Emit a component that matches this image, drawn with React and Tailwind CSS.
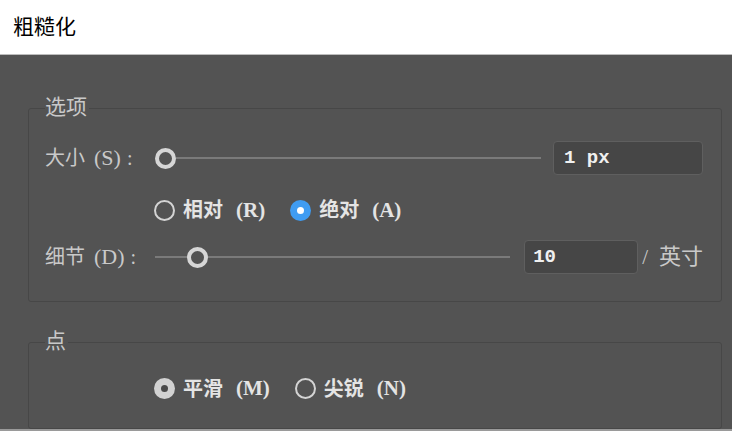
import React from 'react';

const FONT = { fontFamily: '"Liberation Serif", "Noto Sans CJK SC", serif' };
const MONO = { fontFamily: '"Liberation Mono", monospace' };

const Radio = ({ checked, tone = 'blue' }) => {
    if (!checked) {
        return <span className="w-[21px] h-[21px] rounded-full border-2 border-[#d4d4d4] shrink-0" />;
    }
    if (tone === 'blue') {
        return (
            <span className="w-[21px] h-[21px] rounded-full bg-[#3f9cf2] flex items-center justify-center shrink-0">
                <span className="w-[7px] h-[7px] rounded-full bg-white" />
            </span>
        );
    }
    return (
        <span className="w-[21px] h-[21px] rounded-full bg-[#d2d2d2] flex items-center justify-center shrink-0">
            <span className="w-[7px] h-[7px] rounded-full bg-[#4a4a4a]" />
        </span>
    );
};

const RadioOption = ({ label, hotkey, checked, tone }) => (
    <div className="flex items-center">
        <Radio checked={checked} tone={tone} />
        <span className="ml-[8px] text-[20px] font-bold text-[#e4e4e4] leading-none">{label}</span>
        <span className="ml-[13px] text-[21px] font-bold text-[#e4e4e4] leading-none">({hotkey})</span>
    </div>
);

const FieldLabel = ({ label, hotkey }) => (
    <span className="w-[110px] flex items-center text-[20px] leading-none text-[#c9c9c9] shrink-0">
        <span>{label}</span>
        <span className="ml-[9px] text-[22px]">({hotkey})</span>
        <span className="ml-[6px]">:</span>
    </span>
);

const Thumb = () => (
    <span className="w-[21px] h-[21px] rounded-full border-[4px] border-[#d6d6d6] bg-[#535353] shrink-0" />
);

const Group = ({ title, className, children }) => (
    <div className={`relative border border-[#474747] rounded-[3px] ${className}`}>
        <span className="absolute left-[16px] top-[-12px] bg-[#535353] text-[21px] leading-none text-[#c9c9c9] pr-[2px]">
            {title}
        </span>
        {children}
    </div>
);

export default function App() {
    return (
        <div className="w-[732px] h-[431px] bg-[#535353] flex flex-col overflow-hidden" style={FONT}>
            {/* Title bar */}
            <div className="h-[55px] bg-white border-b border-[#bdbdbd] flex items-center px-[13px] shrink-0">
                <span className="text-[21px] text-black leading-none">粗糙化</span>
            </div>

            <div className="flex-1 flex flex-col pl-[28px] pr-[10px] pt-[53px] border-b-2 border-[#9a9a9a]">
                {/* 选项 */}
                <Group title="选项" className="h-[194px] pl-[16px] pr-[18px] pt-[32px] flex flex-col">
                    <div className="flex items-center h-[34px]">
                        <FieldLabel label="大小" hotkey="S" />
                        <Thumb />
                        <span className="flex-1 h-[2px] bg-[#7a7a7a]" />
                        <div className="ml-[12px] w-[150px] h-[34px] bg-[#464646] border border-[#5f5f5f] rounded-[4px] flex items-center pl-[10px]">
                            <span className="text-[19px] font-bold text-[#f0f0f0] leading-none" style={MONO}>1 px</span>
                        </div>
                    </div>

                    <div className="flex items-center gap-[25px] h-[24px] mt-[23px] ml-[109px]">
                        <RadioOption label="相对" hotkey="R" checked={false} />
                        <RadioOption label="绝对" hotkey="A" checked tone="blue" />
                    </div>

                    <div className="flex items-center h-[34px] mt-[18px]">
                        <FieldLabel label="细节" hotkey="D" />
                        <span className="w-[32px] h-[2px] bg-[#7a7a7a]" />
                        <Thumb />
                        <span className="flex-1 h-[2px] bg-[#7a7a7a]" />
                        <div className="ml-[14px] w-[114px] h-[34px] bg-[#464646] border border-[#5f5f5f] rounded-[4px] flex items-center pl-[8px]">
                            <span className="text-[19px] font-bold text-[#f0f0f0] leading-none" style={MONO}>10</span>
                        </div>
                        <span className="ml-[4px] text-[21px] leading-none text-[#c9c9c9] whitespace-nowrap">/</span>
                        <span className="ml-[11px] text-[22px] leading-none text-[#c9c9c9] whitespace-nowrap">英寸</span>
                    </div>
                </Group>

                {/* 点 */}
                <Group title="点" className="mt-[40px] flex-1 pl-[16px]">
                    <div className="flex items-center gap-[25px] mt-[35px] ml-[109px]">
                        <RadioOption label="平滑" hotkey="M" checked tone="gray" />
                        <RadioOption label="尖锐" hotkey="N" checked={false} />
                    </div>
                </Group>
            </div>
        </div>
    );
}
